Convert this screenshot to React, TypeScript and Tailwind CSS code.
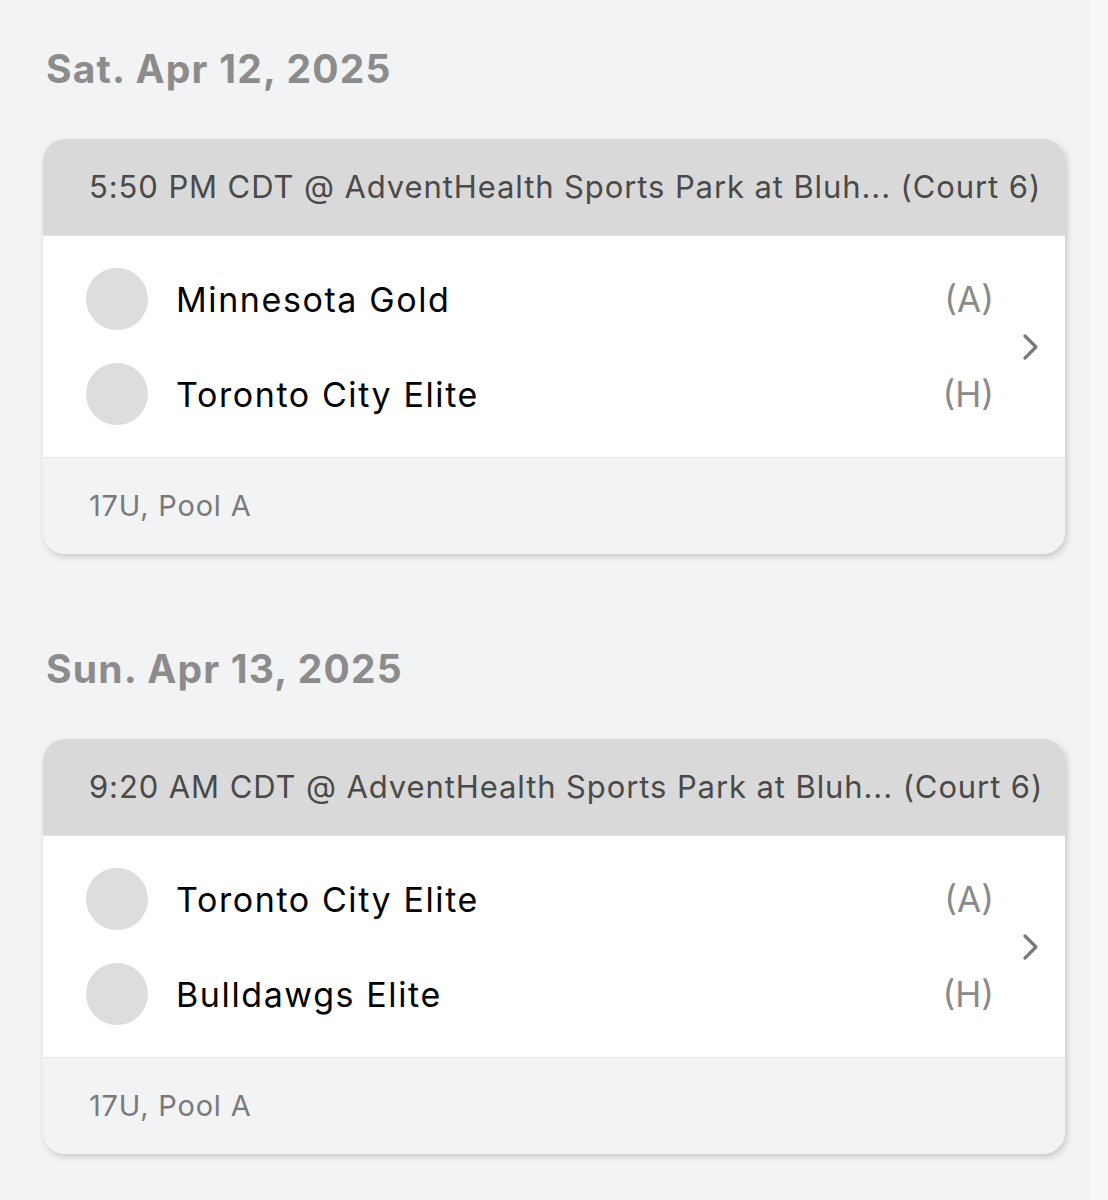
interface Team {
    name: string;
    side: string;
}

interface Game {
    date: string;
    header: string;
    teams: Team[];
    division: string;
}

const games: Game[] = [
    {
        date: 'Sat. Apr 12, 2025',
        header: '5:50 PM CDT @ AdventHealth Sports Park at Bluh... (Court 6)',
        teams: [
            { name: 'Minnesota Gold', side: '(A)' },
            { name: 'Toronto City Elite', side: '(H)' },
        ],
        division: '17U, Pool A',
    },
    {
        date: 'Sun. Apr 13, 2025',
        header: '9:20 AM CDT @ AdventHealth Sports Park at Bluh... (Court 6)',
        teams: [
            { name: 'Toronto City Elite', side: '(A)' },
            { name: 'Bulldawgs Elite', side: '(H)' },
        ],
        division: '17U, Pool A',
    },
];

function Chevron() {
    return (
        <svg width="20" height="28" viewBox="0 0 20 28" fill="none" className="text-[#7a7a7a]">
            <polyline points="4,3 15,14 4,25" stroke="currentColor" strokeWidth="3.2" strokeLinecap="round" strokeLinejoin="round" />
        </svg>
    );
}

function GameCard({ game }: { game: Game }) {
    return (
        <div className="rounded-[22px] overflow-hidden bg-white shadow-[2px_3px_6px_rgba(0,0,0,0.18)]">
            {/* header */}
            <div className="h-[97px] bg-[#d9d9d9] flex items-center pl-[46px] pr-2 border-b border-[#e4e4e4]">
                <span className="text-[31px] text-[#4a4a4a] tracking-[0.9px] whitespace-nowrap">{game.header}</span>
            </div>

            {/* teams */}
            <div className="flex items-center h-[221px]">
                <div className="flex-1 flex flex-col gap-[33px] pl-[43px] pr-[90px]">
                    {game.teams.map((t) => (
                        <div key={t.name} className="flex items-center h-[62px]">
                            <div className="w-[62px] h-[62px] rounded-full bg-[#dddddd]" />
                            <span className="ml-[28px] text-[34px] tracking-[1.6px] text-black flex-1">{t.name}</span>
                            <span className="text-[35px] text-[#8a8a8a]">{t.side}</span>
                        </div>
                    ))}
                </div>
                <div className="-ml-[63px] mr-[24px] flex">
                    <Chevron />
                </div>
            </div>

            {/* footer */}
            <div className="h-[97px] bg-[#f2f3f5] border-t border-[#e6e6e6] flex items-center pl-[46px]">
                <span className="text-[29px] tracking-[0.8px] text-[#7a7a7a]">{game.division}</span>
            </div>
        </div>
    );
}

export default function App() {
    return (
        <div className="min-h-[1200px] w-[1108px] bg-[#f2f3f5] flex font-['Inter',sans-serif]">
            <div className="w-[1090px] pl-[43px] pr-[25px] pt-[44px]">
                {games.map((g) => (
                    <div key={g.date} className="mb-[90px]">
                        <h2 className="pl-[3px] text-[39px] font-bold text-[#8c8c8c] leading-[50px] tracking-[1.2px]">{g.date}</h2>
                        <div className="mt-[45px]">
                            <GameCard game={g} />
                        </div>
                    </div>
                ))}
            </div>
            <div className="flex-1 bg-[#f7f8fa]" />
        </div>
    );
}
